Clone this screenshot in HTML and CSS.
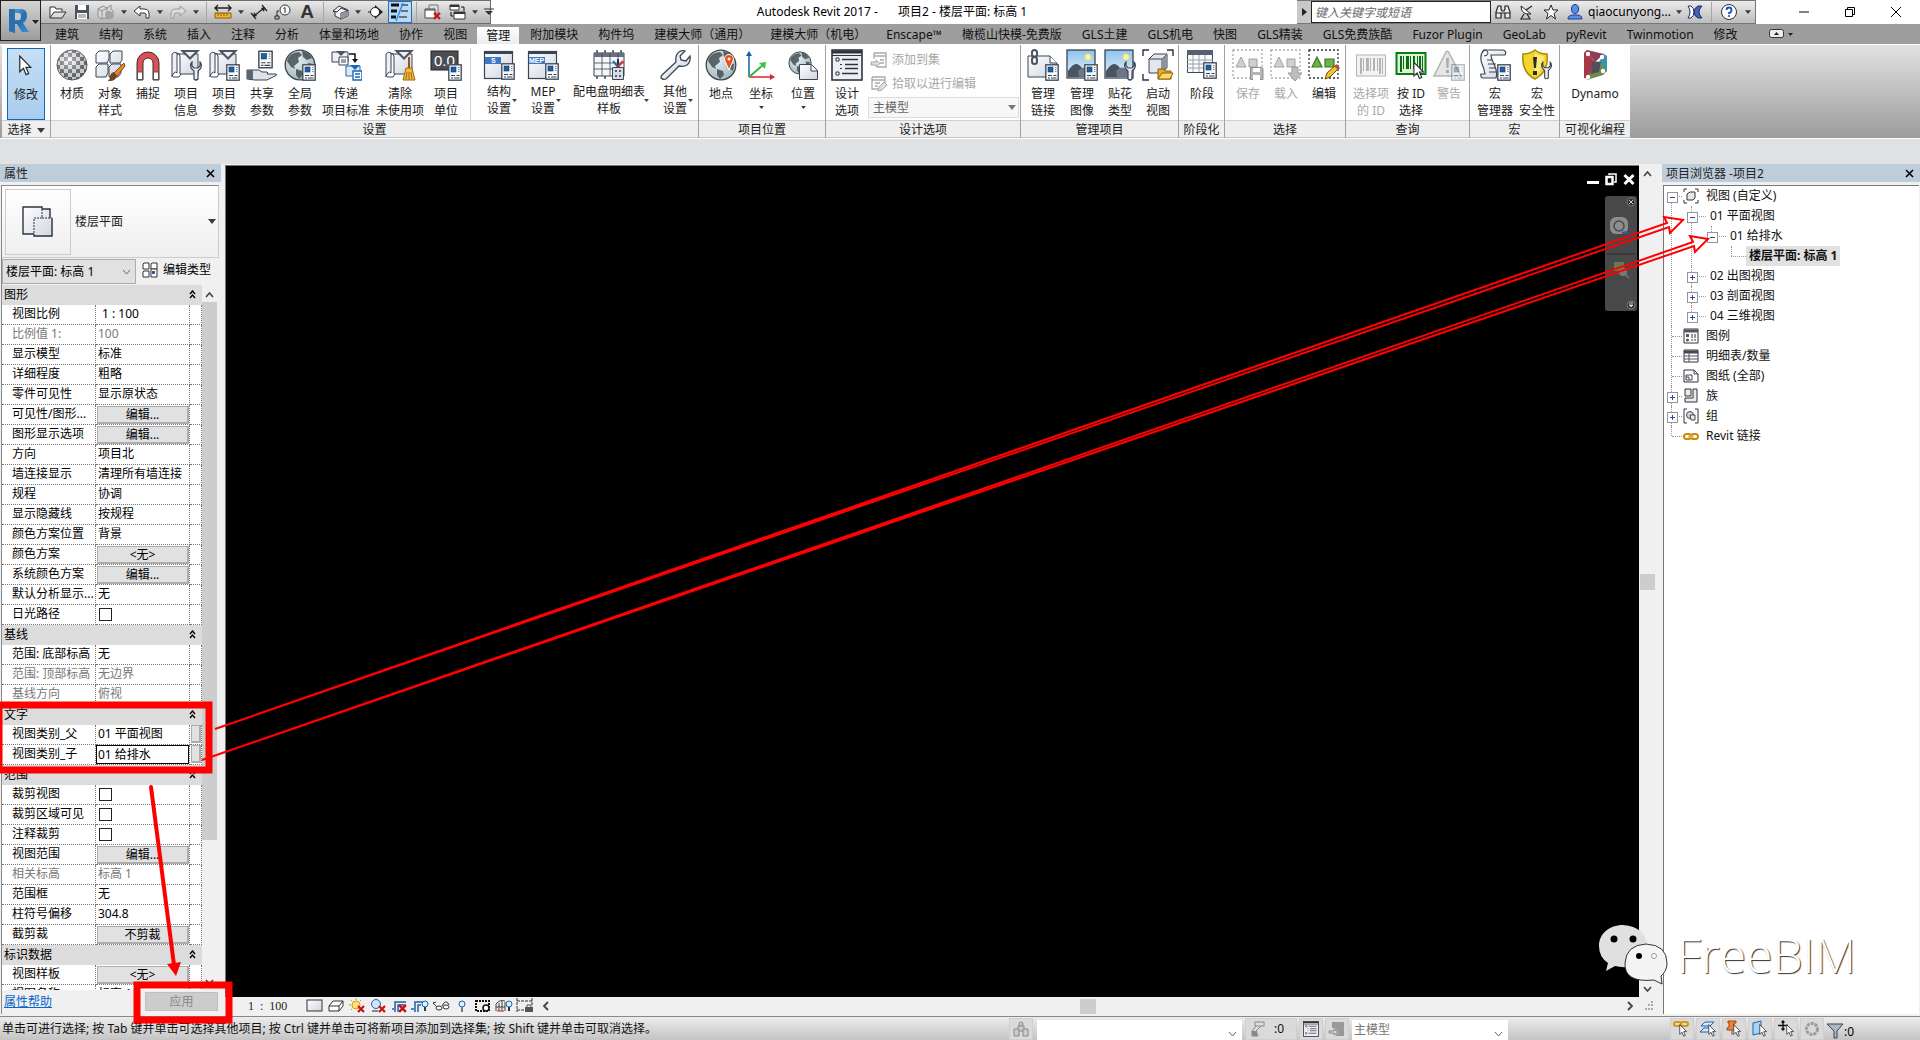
FILE: index.html
```html
<!DOCTYPE html>
<html lang="zh-CN">
<head>
<meta charset="utf-8">
<title>Autodesk Revit 2017 - 项目2</title>
<link rel="stylesheet" href="styles.css">
</head>
<body>
<svg class="sprite" aria-hidden="true">
<defs>
<linearGradient id="gLight" x1="0" y1="0" x2="1" y2="1"><stop offset="0" stop-color="#ffffff"/><stop offset="1" stop-color="#cfd4de"/></linearGradient>
<linearGradient id="gR" x1="0" y1="0" x2="1" y2="1"><stop offset="0" stop-color="#63b4ea"/><stop offset=".5" stop-color="#2a6cb0"/><stop offset="1" stop-color="#3d93d6"/></linearGradient>
<linearGradient id="gSky" x1="0" y1="0" x2="0" y2="1"><stop offset="0" stop-color="#8fc3ea"/><stop offset="1" stop-color="#e6f3fb"/></linearGradient>
<radialGradient id="gGlobe" cx=".4" cy=".35" r=".7"><stop offset="0" stop-color="#e4eff0"/><stop offset="1" stop-color="#9fb4b9"/></radialGradient>
<radialGradient id="gBall" cx=".4" cy=".35" r=".7"><stop offset="0" stop-color="#fff" stop-opacity=".6"/><stop offset="1" stop-color="#444" stop-opacity=".3"/></radialGradient>
<pattern id="chk" width="8" height="8" patternUnits="userSpaceOnUse"><rect width="8" height="8" fill="#fff"/><rect width="4" height="4" fill="#59606a"/><rect x="4" y="4" width="4" height="4" fill="#59606a"/></pattern>
</defs>
<symbol id="card" viewBox="0 0 14 17"><rect x=".8" y=".8" width="12.4" height="15.4" fill="#f7f9fb" stroke="#3a4454" stroke-width="1.3"/><rect x="3" y="3" width="5" height="5" fill="#1f5f9f" stroke="#123a66" stroke-width=".6"/><path d="M10 3.5h1.5M10 5.5h1.5M10 7.5h1.5" stroke="#7d8794"/><path d="M3 11.5h4M8.500 11.500h3M3 14h2M6 14h5.500" stroke="#3a4454" stroke-width="1.100"/></symbol>
<symbol id="wrench" viewBox="0 0 12 20"><path d="M2 1v4l2 2h4l2-2V1c2 2 2 6-1 8l-1 1v8q-2 2-4 0v-8l-1-1C0 7 0 3 2 1z" fill="#eef0f4" stroke="#3a4454" stroke-width="1.200"/></symbol>
<symbol id="caret" viewBox="0 0 8 5"><path d="M0 0h8L4 5z" fill="#3a3a3a"/></symbol>
<symbol id="cursor" viewBox="0 0 12 20"><path d="M1 1v15l3.500-3.300 2.500 6 2.500-1-2.500-6h4.500z" fill="#fff" stroke="#2b2f36" stroke-width="1.200"/></symbol>
<symbol id="sheet" viewBox="0 0 32 32"><path d="M6 5h22v20H10V8Q10 4 7 4" fill="url(#gLight)" stroke="#3a4454"/><path d="M2 5q2-3 5-1v20q-1-2-3 0-2 2-2 4z" fill="#eef0f4" stroke="#3a4454"/><path d="M3 28h6l2-3" fill="none" stroke="#3a4454"/><path d="M10 1h20L20 11z" fill="#4d5665"/><path d="M15 3h10l-5 5z" fill="#eef0f4"/></symbol>
<symbol id="globe" viewBox="0 0 32 32"><circle cx="16" cy="16" r="14.800" fill="url(#gGlobe)" stroke="#3d474b" stroke-width="1.300"/><path d="M4 9Q8 3 15 3l3 3-4 3 1 4-5 4 1 3-4-2-4-6zM18 2q7 1 10 7l-5 2-4-3zM12 20l6 2 1 4-4 4-3-4zM24 14l5 1-1 7-4-3z" fill="#434f52" opacity=".85"/></symbol>
<symbol id="i-mat" viewBox="0 0 32 32"><circle cx="16" cy="16" r="15" fill="url(#chk)" stroke="#555"/><circle cx="16" cy="16" r="15" fill="url(#gBall)"/></symbol>
<symbol id="i-obj" viewBox="0 0 32 32"><g fill="url(#gLight)" stroke="#3a4454"><path d="M2 5l3-3h10v8l-2 4H2zM16 5l3-3h9v9l-2 3H16zM2 18l3-3h9v9l-2 4H2zM15 18l3-3h9v9l-3 4h-9z"/></g><path d="M30 14L20 24l3 3 8-10z" fill="#e08a2c" stroke="#8a4a10"/><path d="M20 23q-4 1-4 5 0 3-3 4 8 1 10-5z" fill="#6b4526"/></symbol>
<symbol id="i-snap" viewBox="0 0 32 32"><path d="M5 31V14a11 11 0 0 1 22 0v17h-6V14a5 5 0 0 0-10 0v17z" fill="#dd4f52" stroke="#3a3030"/><path d="M5.500 23h5v7.500h-5zM21.500 23h5v7.500h-5z" fill="#fff" stroke="#555"/></symbol>
<symbol id="i-info" viewBox="0 0 32 32"><use href="#sheet" width="32" height="32"/><use href="#wrench" x="20" y="12" width="12" height="20"/></symbol>
<symbol id="i-param" viewBox="0 0 32 32"><use href="#sheet" width="32" height="32"/><use href="#card" x="18" y="15" width="14" height="17"/></symbol>
<symbol id="i-share" viewBox="0 0 32 32"><use href="#card" x="12" y="1" width="15" height="19"/><path d="M1 21h8q4-1 7 2h5q2 1 0 2h9q2 1-1 2l-8 4H9l-8-1z" fill="#dfe2e8" stroke="#3a4454"/><path d="M1 21h6v9H1z" fill="#5c6574"/></symbol>
<symbol id="i-global" viewBox="0 0 32 32"><use href="#globe" width="32" height="32"/><use href="#card" x="18" y="15" width="14" height="17"/></symbol>
<symbol id="i-trans" viewBox="0 0 32 32"><path d="M2 3h16v10H2z" fill="#eef0f4" stroke="#3a4454"/><path d="M6 2h10l-5 5z" fill="#4d5665"/><path d="M9 8h9v8H9zM11 11h5M11 13h5" fill="#fff" stroke="#3a4454"/><path d="M19 5h6v6" fill="none" stroke="#111" stroke-width="1.500"/><path d="M22 10h6l-3 4z" fill="#111"/><path d="M16 17h14v10H16z" fill="#dcebfa" stroke="#1b66b8"/><path d="M20 16h10l-5 5z" fill="#1b66b8"/><path d="M23 22h9v9h-9zM25 25h5M25 28h5" fill="#fff" stroke="#1b66b8" stroke-width="1.400"/></symbol>
<symbol id="i-purge" viewBox="0 0 32 32"><use href="#sheet" width="32" height="32"/><path d="M25 8v12" stroke="#9b5417" stroke-width="2"/><path d="M22 19h6l3 12H19z" fill="#f0b840" stroke="#a36a10"/><path d="M23 23l-1 7M25 23v8M27 23l1 7" stroke="#a36a10"/></symbol>
<symbol id="win" viewBox="0 0 32 32"><rect x="1.500" y="2.500" width="28" height="27" fill="url(#gLight)" stroke="#3a4454" stroke-width="1.200"/><path d="M1 2h29v3H1z" fill="#3a4454"/><rect x="2" y="8" width="16" height="7" fill="#3d78c7"/></symbol>
<symbol id="i-panel" viewBox="0 0 32 32"><path d="M1 4h30v23H1z" fill="#f6f7f9" stroke="#3a4454"/><path d="M1 4h30v4H1z" fill="#66707f"/><path d="M1 14h30M1 20h30M9 4v23M17 4v23M25 4v23" stroke="#3a4454" stroke-width=".800"/><path d="M4 1v3M12 1v3M20 1v3M28 1v3M4 27v3M12 27v3" stroke="#3a4454" stroke-width="1.500"/><path d="M20 12l5 6" stroke="#1976c9" stroke-width="2"/><path d="M25 10v8" stroke="#333" stroke-width="2"/><path d="M30 12l-5 6" stroke="#d33" stroke-width="2"/><path d="M19.500 18.500h11v12h-11z" fill="#d7dbe2" stroke="#3a4454"/><path d="M22 21h2v2h-2zM26 21h2v2h-2zM22 26h2v2h-2zM26 26h2v2h-2z" fill="#555e6c"/></symbol>
<symbol id="i-other" viewBox="0 0 32 32"><path d="M3 26L17 13q-1-7 3-10 3-2 6-1l-5 5 1 4 5 1 4-5q1 6-3 9-3 2-8 1L7 30q-3 1-5-1 0-2 1-3z" fill="url(#gLight)" stroke="#3a4454" stroke-width="1.300"/></symbol>
<symbol id="i-place" viewBox="0 0 32 32"><use href="#globe" width="32" height="32"/><path d="M24 21l-4-9a4.500 4.500 0 1 1 8 0z" fill="#e8501c" stroke="#fff"/><circle cx="24" cy="10" r="1.500" fill="#fff"/></symbol>
<symbol id="i-coord" viewBox="0 0 32 32"><path d="M4 28V6" stroke="#0a62b0" stroke-width="1.500"/><path d="M1 7h6L4 2z" fill="#0a62b0"/><path d="M4 28h22" stroke="#d22" stroke-width="1.500"/><path d="M25 25v6l5-3z" fill="#d22"/><path d="M4 28L18 16" stroke="#3cb43c" stroke-width="2"/><path d="M14 14l7-1-1 7z" fill="#3cc43c"/></symbol>
<symbol id="i-pos" viewBox="0 0 32 32"><use href="#globe" x="1" y="2" width="24" height="24"/><path d="M12.500 15.500h12l6 6v9h-18z" fill="url(#gLight)" stroke="#3a4454"/><path d="M24 16v6h6" fill="#fff" stroke="#3a4454"/></symbol>
<symbol id="i-opt" viewBox="0 0 32 32"><rect x="1" y="1" width="30" height="30" fill="#edeff3" stroke="#2d3440" stroke-width="1.600"/><path d="M1 3h30" stroke="#2d3440" stroke-width="3"/><path d="M1 6.500h30" stroke="#2d3440"/><path d="M5 9h3v3H5zM5 23h3v3H5z" fill="#fff" stroke="#2d3440"/><path d="M11 10.500h16M14 15.500h13M14 19.500h13M11 24.500h16" stroke="#2d3440" stroke-width="1.400"/><path d="M9 15h2v1H9zM9 19h2v1H9z" fill="#2d3440"/></symbol>
<symbol id="i-link" viewBox="0 0 32 32"><path d="M1 7h22l7 7v14H1z" fill="url(#gLight)" stroke="#3a4454"/><path d="M23 7v7h7" fill="#fff" stroke="#3a4454"/><g fill="none" stroke="#4a5462" stroke-width="2"><rect x="5" y="1" width="5" height="7" rx="2.500"/><rect x="5" y="8" width="5" height="7" rx="2.500"/></g><use href="#card" x="18" y="15" width="14" height="17"/></symbol>
<symbol id="pic" viewBox="0 0 32 32"><rect x="1" y="1" width="28" height="28" fill="url(#gSky)" stroke="#3a4454" stroke-width="1.300"/><circle cx="22" cy="8" r="3" fill="#fff3a0" stroke="#f3e27b"/><path d="M2 22q5-8 9-7 5 1 9 13H2z" fill="#4b5361"/><path d="M12 22q4-5 8-3l8 6v3H13z" fill="#6d7688"/></symbol>
<symbol id="i-img" viewBox="0 0 32 32"><use href="#pic" width="32" height="32"/><use href="#card" x="18" y="15" width="14" height="17"/></symbol>
<symbol id="i-decal" viewBox="0 0 32 32"><use href="#pic" width="32" height="32"/><use href="#wrench" x="20" y="12" width="12" height="20"/></symbol>
<symbol id="i-start" viewBox="0 0 32 32"><path d="M1 7V1h6M25 1h6v6M1 25v6h6" fill="none" stroke="#2d3440" stroke-width="1.400"/><path d="M7 10l5-5h13v14l-5 5H7z" fill="#e3e6ec" stroke="#3a4454"/><path d="M7 10h13v14M20 10l5-5" fill="none" stroke="#3a4454"/><path d="M20 10l5-5v14l-5 5z" fill="#8b939f"/><path d="M16 20h6l1 2h6v8H16z" fill="#e8a92c" stroke="#8a5c0c"/><path d="M16 30l4-6h11l-3 6z" fill="#ffd968" stroke="#8a5c0c"/></symbol>
<symbol id="i-phase" viewBox="0 0 32 32"><path d="M1.500 1.500h25v22h-25z" fill="#fafbfc" stroke="#3a4454"/><path d="M1 1h26v5H1z" fill="#566073"/><path d="M1 11h26M1 15h26M1 19h26M7 6v17M13 6v17M19 6v17" stroke="#9aa1ab"/><use href="#card" x="17" y="13" width="14" height="17"/></symbol>
<symbol id="selbox" viewBox="0 0 32 32"><rect x="1" y="1" width="29" height="28" fill="none" stroke="currentColor" stroke-width="1.300" stroke-dasharray="2 2"/></symbol>
<symbol id="i-ssave" viewBox="0 0 32 32" color="#a9a9a9"><use href="#selbox" width="32" height="32"/><path d="M4 18l5-10 5 10zM17 10h8v8h-8z" fill="#d0d0d0" stroke="#a0a0a0"/><path d="M18.500 18.500h11l1.500 1v11h-12.500z" fill="#b5b5b5" stroke="#8f8f8f"/><path d="M21 19h7v4h-7zM21 26h7v5h-7z" fill="#fff"/></symbol>
<symbol id="i-sload" viewBox="0 0 32 32" color="#a9a9a9"><use href="#selbox" width="32" height="32"/><path d="M4 18l5-10 5 10zM17 10h8v8h-8z" fill="#d0d0d0" stroke="#a0a0a0"/><path d="M22 18h6v6h4l-7 8-7-8h4z" fill="#bdbdbd" stroke="#999"/></symbol>
<symbol id="i-sedit" viewBox="0 0 32 32" color="#2d3348"><use href="#selbox" width="32" height="32"/><path d="M4 18l5-10 5 10zM17 10h9v8h-9z" fill="#6fb14d" stroke="#3b7a1e" stroke-width="1.200"/><path d="M17 30l2-6 9-8 3 3-9 9z" fill="#f2c72e" stroke="#6d4a0c"/><path d="M26 17l4 4 2-2-3-4z" fill="#b5562a"/></symbol>
<symbol id="bars" viewBox="0 0 32 24"><path d="M5 4h2v16H5zM8 4h1v13H8zM11 4h3v13h-3zM15 4h1v13h-1zM18 4h2v13h-2zM22 4h1v13h-1zM24 4h2v16h-2zM27 4h1v16h-1z" fill="currentColor"/></symbol>
<symbol id="i-idof" viewBox="0 0 32 32" color="#b3b3b3"><rect x="1.500" y="6" width="29" height="21" fill="#f3f3f3" stroke="#b3b3b3"/><use href="#bars" x="0" y="5" width="32" height="24"/></symbol>
<symbol id="i-byid" viewBox="0 0 32 32" color="#0b6d12"><rect x="1.500" y="4" width="29" height="21" fill="#dff2d8" stroke="#0b7a12" stroke-width="2"/><use href="#bars" x="0" y="3" width="32" height="24"/><use href="#cursor" x="18" y="12" width="11" height="19"/></symbol>
<symbol id="i-warn" viewBox="0 0 32 32"><path d="M13 3q1-1.500 2.500 0L28 27H1z" fill="#e6e6e6" stroke="#b5b5b5" stroke-width="1.500"/><path d="M13 9h3l-.5 10h-2zM13 21h3v3h-3z" fill="#aaa"/><g opacity=".4"><use href="#card" x="18" y="15" width="14" height="17"/></g></symbol>
<symbol id="i-macro" viewBox="0 0 32 32"><path d="M5 1h19q4 1 2 5H12q0 4 3 9 4 8 2 14H5q-4 0-3-4h4q-1-6-3-10Q0 6 5 1z" fill="url(#gLight)" stroke="#3a4454" stroke-width="1.200"/><path d="M5 1q4 0 4 3t-4 3" fill="none" stroke="#3a4454"/><path d="M8 11h6M9 15h8M10 19h7M10 23h7" stroke="#3a4454"/><use href="#card" x="18" y="15" width="14" height="17"/></symbol>
<symbol id="i-msec" viewBox="0 0 32 32"><path d="M14 1q5 4 12 4 2 18-12 25Q0 23 2 5q7 0 12-4z" fill="#f5d52a" stroke="#a58a10" stroke-width="1.500"/><path d="M14 4q4 3 9 3 0 14-9 20" fill="#fbe97c"/><path d="M12 8h4l-1 11h-2zM12 22h4v4h-4z" fill="#2b2b2b"/><use href="#wrench" x="20" y="12" width="11" height="19"/></symbol>
<symbol id="i-dyn" viewBox="0 0 32 32"><path d="M5 4l3-3 15 5-10 9-6 15z" fill="#c94a52"/><path d="M5 4l3-3 6 12-3 17-6-1z" fill="#a83746"/><path d="M8 1l17 4-9 8z" fill="#87415c"/><path d="M25 5l3 2v16l-8-10z" fill="#3b93a8"/><path d="M28 22l-4 4-16 5 6-14 8-2z" fill="#6f8a4a"/><path d="M13 12l9 1-2 10-8 2z" fill="#50505c"/><g fill="#fff"><circle cx="9" cy="5" r="2.200"/><circle cx="23" cy="8" r="2.200"/><circle cx="24" cy="22" r="2.200"/><circle cx="9" cy="28" r="2.200"/></g></symbol>
<symbol id="i-xdel" viewBox="0 0 8 8"><path d="M1 1l6 6M7 1L1 7" stroke="#c81414" stroke-width="2.200"/></symbol>
</svg>

<div class="app">
<header class="top">
  <button class="appbtn" aria-label="应用程序菜单"><svg width="41" height="41" viewBox="0 0 41 41"><path d="M8 8h12q6 0 6 7 0 5-4 7l6 9h-7l-5-8h-2v9l-6-2z" fill="url(#gR)"/><path d="M14 12v7h4q2 0 2-3.500T18 12z" fill="#c6c8ca"/><path d="M8 8h6v24l-6-2z" fill="#2c6fae"/><path d="M31 19h7l-3.500 4z" fill="#222"/></svg></button>
  <div class="titlebar">
    <div class="qat">
      <button aria-label="打开"><svg width="18" height="16" viewBox="0 0 18 16"><path d="M1 14V3h5l1 2h6v2" fill="#fff" stroke="#333"/><path d="M1 14l4-6h12l-4 6z" fill="#d9dce2" stroke="#333"/></svg></button>
      <button aria-label="保存"><svg width="16" height="16" viewBox="0 0 16 16"><path d="M1 1h14v14H1z" fill="#4b535f"/><path d="M4 1h8v5H4zM3 9h10v6H3z" fill="#fff"/><path d="M4 11h8M4 13h8" stroke="#777"/></svg></button>
      <button aria-label="同步"><svg width="18" height="16" viewBox="0 0 18 16"><path d="M1 5l5-3 4 2 4-3v4l2 2v6l-4 2-4-1-4 1-3-3z" fill="#d6d8da" stroke="#8d8f92"/><path d="M1 5l4 2 5-3M5 7v8M10 4v4" fill="none" stroke="#8d8f92"/><circle cx="12" cy="11" r="4" fill="#a2a4a7"/></svg></button>
      <button class="dd" aria-label="同步选项"><svg width="6" height="4"><use href="#caret"/></svg></button>
      <button aria-label="放弃"><svg width="18" height="14" viewBox="0 0 18 14"><path d="M1 6l6-5v3h4q5 0 5 5v4h-3V9q0-1-2-1H7v3z" fill="#fff" stroke="#333"/></svg></button>
      <button class="dd" aria-label="放弃选项"><svg width="6" height="4"><use href="#caret"/></svg></button>
      <button aria-label="重做"><svg width="18" height="14" viewBox="0 0 18 14"><path d="M17 6l-6-5v3H7Q2 4 2 9v4h3V9q0-1 2-1h4v3z" fill="#ddd" stroke="#999"/></svg></button>
      <button class="dd" aria-label="重做选项"><svg width="6" height="4"><use href="#caret"/></svg></button>
      <i class="vsep"></i>
      <button aria-label="测量"><svg width="18" height="14" viewBox="0 0 18 14"><path d="M1 3h16M4 0L1 3l3 3M14 0l3 3-3 3" fill="none" stroke="#222" stroke-width="1.400"/><path d="M1 8h16v5H1z" fill="#f2b92c" stroke="#8a5c0c"/><path d="M4 8v3M7 8v3M10 8v3M13 8v3" stroke="#8a5c0c"/></svg></button>
      <button class="dd" aria-label="测量选项"><svg width="6" height="4"><use href="#caret"/></svg></button>
      <button aria-label="对齐尺寸标注"><svg width="18" height="16" viewBox="0 0 18 16"><path d="M4 12L14 4M1 9l5 6M12 1l5 6" stroke="#222" stroke-width="1.200"/><path d="M3 13l1-5 3 4zM15 3l-1 5-3-4z" fill="#222"/></svg></button>
      <button aria-label="按类别标记"><svg width="16" height="16" viewBox="0 0 16 16"><circle cx="10" cy="6" r="5" fill="#fff" stroke="#333"/><path d="M8.500 4.500L10 3.500V9M4 7H2v5M0 12h4v3H0z" fill="none" stroke="#222"/></svg></button>
      <button class="glyphA" aria-label="文字">A</button>
      <i class="vsep"></i>
      <button aria-label="三维视图"><svg width="17" height="16" viewBox="0 0 17 16"><path d="M1 7l6-5 9 4v6l-7 3-6-3V8z" fill="#eef0f3" stroke="#333"/><path d="M1 7l4 1 4-4 7 3-7 2v6" fill="none" stroke="#333"/><path d="M9 9l7-2v5l-7 3z" fill="#8f97a3"/></svg></button>
      <button class="dd" aria-label="三维视图选项"><svg width="6" height="4"><use href="#caret"/></svg></button>
      <button aria-label="剖面"><svg width="16" height="16" viewBox="0 0 16 16"><path d="M7 1l8 7-8 7z" fill="#222"/><circle cx="7" cy="8" r="4.500" fill="#fff" stroke="#222"/><path d="M0 8h2" stroke="#222"/></svg></button>
      <button class="on" aria-label="细线"><svg width="18" height="18" viewBox="0 0 18 18"><path d="M0 2h8M0 8h6M0 14h5" stroke="#111" stroke-width="3"/><path d="M10 2h7M10 8h7M8 14h8" stroke="#111"/><path d="M12 0L5 18" stroke="#2a8de8" stroke-width="1.400"/></svg></button>
      <i class="vsep"></i>
      <button aria-label="关闭隐藏窗口"><svg width="18" height="16" viewBox="0 0 18 16"><path d="M5 1h9v8H5z" fill="#ddd" stroke="#777"/><path d="M1 5h10v9H1z" fill="#fff" stroke="#444"/><path d="M1 6h10" stroke="#444"/><use href="#i-xdel" x="9" y="8" width="8" height="8"/></svg></button>
      <button aria-label="切换窗口"><svg width="17" height="16" viewBox="0 0 17 16"><path d="M1 1h9v5H1zM5 8h11v7H5z" fill="#fff" stroke="#333"/><path d="M1 2h9M5 9h11" stroke="#333" stroke-width="2"/><path d="M12 3h3v4M2 8v4h2" fill="none" stroke="#111"/></svg></button>
      <button class="dd" aria-label="窗口选项"><svg width="6" height="4"><use href="#caret"/></svg></button>
      <button class="cust" aria-label="自定义快速访问工具栏"><svg width="10" height="8" viewBox="0 0 10 8"><path d="M0 1h10" stroke="#333"/><path d="M1 3h8L5 7z" fill="#333"/></svg></button>
    </div>
    <h1 class="title"><span>Autodesk Revit 2017 -</span><span>项目2 - 楼层平面: 标高 1</span></h1>
    <div class="info">
      <button class="exp" aria-label="展开搜索"><svg width="5" height="8"><path d="M0 0l5 4-5 4z" fill="#222"/></svg></button>
      <input class="search" type="text" placeholder="键入关键字或短语" aria-label="搜索">
      <button aria-label="查找"><svg width="16" height="16" viewBox="0 0 16 16"><path d="M3 2h3v3l1 2h2l1-2V2h3l2 6v6h-5V9H6v5H1V8z" fill="#e8eaee" stroke="#222" stroke-width="1.200"/><path d="M1 9h5M10 9h5" stroke="#222"/></svg></button>
      <button aria-label="通讯中心"><svg width="16" height="16" viewBox="0 0 16 16"><path d="M2 2q0 9 10 8z" fill="#fff" stroke="#222"/><path d="M7 6l6-4M5 10l-3 5h9l-3-5" fill="none" stroke="#222" stroke-width="1.200"/></svg></button>
      <button aria-label="收藏夹"><svg width="16" height="16" viewBox="0 0 16 16"><path d="M8 1l2 5h5l-4 3.500L12.500 15 8 11.500 3.500 15 5 9.500 1 6h5z" fill="#fff" stroke="#222"/></svg></button>
      <button class="user"><svg width="16" height="16" viewBox="0 0 16 16"><ellipse cx="8" cy="5" rx="3.500" ry="4.500" fill="#5b8fe6" stroke="#1c3f8c"/><path d="M1 15q0-4 5-4h4q5 0 5 4z" fill="#5b8fe6" stroke="#1c3f8c"/></svg><span>qiaocunyong...</span><svg width="6" height="4"><use href="#caret"/></svg></button>
      <button class="xch" aria-label="应用商店"><svg width="16" height="14" viewBox="0 0 16 14"><path d="M1 1h3q3 2 3 6t-3 6H1q2-3 2-6T1 1z" fill="#fff" stroke="#1c2f66"/><path d="M15 1h-4Q7 3 7 7t4 6h4q-3-3-3-6t3-6z" fill="#3f63b8" stroke="#1c2f66"/></svg></button>
      <i class="vsep"></i>
      <button class="help" aria-label="帮助"><svg width="18" height="18" viewBox="0 0 18 18"><circle cx="9" cy="9" r="7.500" fill="#fff" stroke="#333"/><path d="M6.500 7q0-2.500 2.500-2.500T11.500 7 9 10v1" fill="none" stroke="#1c4fc0" stroke-width="1.800"/><circle cx="9" cy="13" r="1.100" fill="#1c4fc0"/></svg></button>
      <button class="dd" aria-label="帮助选项"><svg width="6" height="4"><use href="#caret"/></svg></button>
    </div>
    <div class="winctl">
      <button aria-label="最小化"><svg width="12" height="12"><path d="M1 6h10" stroke="#000"/></svg></button>
      <button aria-label="还原"><svg width="12" height="12"><path d="M3.500 3V1.500h7v7H9M1.500 3.500h7v7h-7z" fill="none" stroke="#000"/></svg></button>
      <button aria-label="关闭"><svg width="12" height="12"><path d="M1 1l10 10M11 1L1 11" stroke="#000"/></svg></button>
    </div>
  </div>
  <nav class="tabs">
    <a href="#">建筑</a><a href="#">结构</a><a href="#">系统</a><a href="#">插入</a><a href="#">注释</a><a href="#">分析</a><a href="#">体量和场地</a><a href="#">协作</a><a href="#">视图</a><a href="#" class="active">管理</a><a href="#">附加模块</a><a href="#">构件坞</a><a href="#">建模大师（通用）</a><a href="#">建模大师（机电）</a><a href="#">Enscape™</a><a href="#">橄榄山快模-免费版</a><a href="#">GLS土建</a><a href="#">GLS机电</a><a href="#">快图</a><a href="#">GLS精装</a><a href="#">GLS免费族酷</a><a href="#">Fuzor Plugin</a><a href="#">GeoLab</a><a href="#">pyRevit</a><a href="#">Twinmotion</a><a href="#">修改</a>
    <button aria-label="最小化功能区"><svg width="24" height="10" viewBox="0 0 24 10"><rect x=".5" y=".5" width="14" height="8" rx="2" fill="#eee" stroke="#333"/><path d="M5 6l2.500-3L10 6z" fill="#222"/><path d="M19 4h5l-2.500 3z" fill="#222"/></svg></button>
  </nav>
</header>

<div class="ribbon">
  <section class="panel p-sel"><div class="tools"><button class="tool mod"><svg class="ic"><use href="#cursor" x="8" y="5" width="14" height="21"/></svg><span>修改</span></button></div><h2>选择 <svg width="8" height="5"><use href="#caret"/></svg></h2></section>
  <section class="panel p-set"><div class="tools">
    <button class="tool"><svg class="ic"><use href="#i-mat"/></svg><span>材质</span></button>
    <button class="tool"><svg class="ic"><use href="#i-obj"/></svg><span>对象<br>样式</span></button>
    <button class="tool"><svg class="ic"><use href="#i-snap"/></svg><span>捕捉</span></button>
    <button class="tool"><svg class="ic"><use href="#i-info"/></svg><span>项目<br>信息</span></button>
    <button class="tool"><svg class="ic"><use href="#i-param"/></svg><span>项目<br>参数</span></button>
    <button class="tool"><svg class="ic"><use href="#i-share"/></svg><span>共享<br>参数</span></button>
    <button class="tool"><svg class="ic"><use href="#i-global"/></svg><span>全局<br>参数</span></button>
    <button class="tool w54"><svg class="ic"><use href="#i-trans"/></svg><span>传递<br>项目标准</span></button>
    <button class="tool w54"><svg class="ic"><use href="#i-purge"/></svg><span>清除<br>未使用项</span></button>
    <button class="tool"><svg class="ic"><rect x="1" y="2" width="27" height="19" fill="#4a4e54" stroke="#222"/><text class="digits" x="4" y="17">0.0</text><use href="#card" x="18" y="15" width="14" height="17"/></svg><span>项目<br>单位</span></button>
    <i class="psep"></i>
    <button class="tool w44 drop"><svg class="ic"><use href="#win"/><text class="tiny" x="8" y="14">S</text><use href="#card" x="18" y="14" width="14" height="17"/></svg><span>结构<br>设置</span><svg class="car"><use href="#caret"/></svg></button>
    <button class="tool w44 drop"><svg class="ic"><use href="#win"/><text class="tiny" x="2" y="14">MEP</text><use href="#card" x="18" y="14" width="14" height="17"/></svg><span>MEP<br>设置</span><svg class="car"><use href="#caret"/></svg></button>
    <button class="tool w88 drop"><svg class="ic"><use href="#i-panel"/></svg><span>配电盘明细表<br>样板</span><svg class="car"><use href="#caret"/></svg></button>
    <button class="tool w44 drop"><svg class="ic"><use href="#i-other"/></svg><span>其他<br>设置</span><svg class="car"><use href="#caret"/></svg></button>
  </div><h2>设置</h2></section>
  <section class="panel p-loc"><div class="tools">
    <button class="tool w40"><svg class="ic"><use href="#i-place"/></svg><span>地点</span></button>
    <button class="tool w40"><svg class="ic"><use href="#i-coord"/></svg><span>坐标</span><svg class="below"><use href="#caret"/></svg></button>
    <button class="tool w44"><svg class="ic"><use href="#i-pos"/></svg><span>位置</span><svg class="below"><use href="#caret"/></svg></button>
  </div><h2>项目位置</h2></section>
  <section class="panel p-des"><div class="tools">
    <button class="tool"><svg class="ic"><use href="#i-opt"/></svg><span>设计<br>选项</span></button>
    <div class="stack">
      <button disabled><svg width="16" height="16" viewBox="0 0 16 16"><path d="M3 1h12v14H6M3 1v6M3 4h12M9 8h4M9 11h4" fill="none" stroke="#aaa" stroke-width="1.300"/><path d="M0 10h5V8l4 3.500L5 15v-2H0z" fill="#ddd" stroke="#aaa"/></svg>添加到集</button>
      <button disabled><svg width="16" height="16" viewBox="0 0 16 16"><path d="M1 1h13v6M1 1v12h6M1 4h13M4 7h5M4 10h3" fill="none" stroke="#aaa" stroke-width="1.300"/><path d="M7 15l1-4 5-5 3 3-5 5z" fill="#ddd" stroke="#aaa"/></svg>拾取以进行编辑</button>
      <select aria-label="设计选项" disabled><option>主模型</option></select>
    </div>
  </div><h2>设计选项</h2></section>
  <section class="panel p-man"><div class="tools">
    <button class="tool w40"><svg class="ic"><use href="#i-link"/></svg><span>管理<br>链接</span></button>
    <button class="tool"><svg class="ic"><use href="#i-img"/></svg><span>管理<br>图像</span></button>
    <button class="tool"><svg class="ic"><use href="#i-decal"/></svg><span>贴花<br>类型</span></button>
    <button class="tool"><svg class="ic"><use href="#i-start"/></svg><span>启动<br>视图</span></button>
  </div><h2>管理项目</h2></section>
  <section class="panel p-pha"><div class="tools"><button class="tool w42"><svg class="ic"><use href="#i-phase"/></svg><span>阶段</span></button></div><h2>阶段化</h2></section>
  <section class="panel p-pick"><div class="tools">
    <button class="tool" disabled><svg class="ic"><use href="#i-ssave"/></svg><span>保存</span></button>
    <button class="tool" disabled><svg class="ic"><use href="#i-sload"/></svg><span>载入</span></button>
    <button class="tool"><svg class="ic"><use href="#i-sedit"/></svg><span>编辑</span></button>
  </div><h2>选择</h2></section>
  <section class="panel p-inq"><div class="tools">
    <button class="tool w42" disabled><svg class="ic"><use href="#i-idof"/></svg><span>选择项<br>的 ID</span></button>
    <button class="tool"><svg class="ic"><use href="#i-byid"/></svg><span>按 ID<br>选择</span></button>
    <button class="tool" disabled><svg class="ic"><use href="#i-warn"/></svg><span>警告</span></button>
  </div><h2>查询</h2></section>
  <section class="panel p-mac"><div class="tools">
    <button class="tool w42"><svg class="ic"><use href="#i-macro"/></svg><span>宏<br>管理器</span></button>
    <button class="tool w42"><svg class="ic"><use href="#i-msec"/></svg><span>宏<br>安全性</span></button>
  </div><h2>宏</h2></section>
  <section class="panel p-dyn"><div class="tools"><button class="tool w54"><svg class="ic"><use href="#i-dyn"/></svg><span>Dynamo</span></button></div><h2>可视化编程</h2></section>
</div>
<div class="optbar"></div>

<main class="work">
  <aside class="props">
    <div class="ptitle"><span>属性</span><button aria-label="关闭属性"><svg width="9" height="9"><path d="M1 1l7 7M8 1L1 8" stroke="#000" stroke-width="1.600"/></svg></button></div>
    <div class="pbody">
      <button class="type"><span class="thumb"><svg width="32" height="32" viewBox="0 0 32 32"><path d="M1 1h19v3h9v10h2v17H12v-3H1z" fill="url(#gLight)"/><path d="M12 28H1V1h19v2M20 3h8v9M30 12v18H12v-2" fill="none" stroke="#2d3440" stroke-width="1.400"/><path d="M20 3v9h10M20 12h-8v16" fill="none" stroke="#2d3440" stroke-dasharray="2 1"/></svg></span><span class="tname">楼层平面</span><svg width="8" height="5"><use href="#caret"/></svg></button>
      <div class="inst"><select aria-label="实例"><option>楼层平面: 标高 1</option></select><button class="edit"><svg width="16" height="16" viewBox="0 0 16 16"><path d="M1 2l1-1h5v6H1zM9 2l1-1h5v6H9zM1 10l1-1h5v6H1z" fill="#fff" stroke="#333"/><path d="M9 7h6v8H9z" fill="#fff" stroke="#333"/><path d="M10 9h3v3h-3z" fill="#1f5f9f"/></svg>编辑类型</button></div>
      <div class="list">
        <div class="scroller">
        <table class="grid">
          <colgroup><col class="c1"><col class="c2"><col class="c3"></colgroup>
          <tbody>
          <tr><th colspan="3">图形<span class="chev"></span></th></tr>
          <tr><td>视图比例</td><td class="ind">1 : 100</td><td></td></tr>
          <tr class="ro"><td>比例值 1:</td><td>100</td><td></td></tr>
          <tr><td>显示模型</td><td>标准</td><td></td></tr>
          <tr><td>详细程度</td><td>粗略</td><td></td></tr>
          <tr><td>零件可见性</td><td>显示原状态</td><td></td></tr>
          <tr><td>可见性/图形...</td><td><button>编辑...</button></td><td></td></tr>
          <tr><td>图形显示选项</td><td><button>编辑...</button></td><td></td></tr>
          <tr><td>方向</td><td>项目北</td><td></td></tr>
          <tr><td>墙连接显示</td><td>清理所有墙连接</td><td></td></tr>
          <tr><td>规程</td><td>协调</td><td></td></tr>
          <tr><td>显示隐藏线</td><td>按规程</td><td></td></tr>
          <tr><td>颜色方案位置</td><td>背景</td><td></td></tr>
          <tr><td>颜色方案</td><td><button>&lt;无&gt;</button></td><td></td></tr>
          <tr><td>系统颜色方案</td><td><button>编辑...</button></td><td></td></tr>
          <tr><td>默认分析显示...</td><td>无</td><td></td></tr>
          <tr><td><label for="k1">日光路径</label></td><td><input type="checkbox" id="k1"></td><td></td></tr>
          <tr><th colspan="3">基线<span class="chev"></span></th></tr>
          <tr><td>范围: 底部标高</td><td>无</td><td></td></tr>
          <tr class="ro"><td>范围: 顶部标高</td><td>无边界</td><td></td></tr>
          <tr class="ro"><td>基线方向</td><td>俯视</td><td></td></tr>
          <tr><th colspan="3">文字<span class="chev"></span></th></tr>
          <tr><td>视图类别_父</td><td>01 平面视图</td><td><button aria-label="关联父参数"></button></td></tr>
          <tr><td><label for="sub">视图类别_子</label></td><td><input type="text" id="sub" value="01 给排水"></td><td><button aria-label="关联子参数"></button></td></tr>
          <tr><th colspan="3">范围<span class="chev"></span></th></tr>
          <tr><td><label for="k2">裁剪视图</label></td><td><input type="checkbox" id="k2"></td><td></td></tr>
          <tr><td><label for="k3">裁剪区域可见</label></td><td><input type="checkbox" id="k3"></td><td></td></tr>
          <tr><td><label for="k4">注释裁剪</label></td><td><input type="checkbox" id="k4"></td><td></td></tr>
          <tr><td>视图范围</td><td><button>编辑...</button></td><td></td></tr>
          <tr class="ro"><td>相关标高</td><td>标高 1</td><td></td></tr>
          <tr><td>范围框</td><td>无</td><td></td></tr>
          <tr><td>柱符号偏移</td><td>304.8</td><td></td></tr>
          <tr><td>截剪裁</td><td><button>不剪裁</button></td><td></td></tr>
          <tr><th colspan="3">标识数据<span class="chev"></span></th></tr>
          <tr><td>视图样板</td><td><button>&lt;无&gt;</button></td><td></td></tr>
          <tr><td>视图名称</td><td>标高 1</td><td></td></tr>
          </tbody>
        </table>
        </div>
        <div class="vbar"><svg width="9" height="6"><path d="M1 5l3.500-4L8 5" fill="none" stroke="#444" stroke-width="1.600"/></svg><i class="thumbv"></i><svg width="9" height="6"><path d="M1 1l3.500 4L8 1" fill="none" stroke="#444" stroke-width="1.600"/></svg></div>
      </div>
      <div class="pfoot"><a href="#">属性帮助</a><button disabled>应用</button></div>
    </div>
  </aside>

  <section class="view">
    <div class="canvas">
      <div class="docctl">
        <button aria-label="最小化视图"><svg width="12" height="12"><path d="M0 8h12v3H0z" fill="#fff"/></svg></button>
        <button aria-label="还原视图"><svg width="12" height="12"><path d="M4 2V1h7v8H9" fill="none" stroke="#fff" stroke-width="1.500"/><path d="M1.500 4h6v7h-6z" fill="none" stroke="#fff" stroke-width="2.500"/></svg></button>
        <button aria-label="关闭视图"><svg width="12" height="12"><path d="M1.500 2l9 9M10.500 2l-9 9" stroke="#fff" stroke-width="3"/></svg></button>
      </div>
      <div class="navbar">
        <svg width="32" height="115" viewBox="0 0 32 115"><circle cx="26" cy="6" r="4" fill="#2e2e2e" stroke="#777"/><path d="M24 4l4 4M28 4l-4 4" stroke="#ccc"/><rect x="5" y="21" width="18" height="17" rx="6" fill="#8b8e90"/><circle cx="14" cy="30" r="5" fill="none" stroke="#4a4a4a" stroke-width="1.500"/><path d="M17 37q4-2 8 1" fill="none" stroke="#2f5a8c" stroke-width="2"/><path d="M2 58h28" stroke="#2c2c2c"/><rect x="9" y="66" width="10" height="9" fill="#5d7f50"/><circle cx="18" cy="76" r="4" fill="#77797a"/><path d="M20 78l4 4" stroke="#777" stroke-width="1.500"/><circle cx="26" cy="109" r="4" fill="#2e2e2e" stroke="#777"/><path d="M24 107h4M24 109h4l-2 2z" stroke="#ccc" fill="#ccc"/></svg>
      </div>
    </div>
    <div class="vscroll"><svg width="9" height="6"><path d="M1 5l3.500-4L8 5" fill="none" stroke="#444" stroke-width="1.600"/></svg><i></i><svg width="9" height="6"><path d="M1 1l3.500 4L8 1" fill="none" stroke="#444" stroke-width="1.600"/></svg></div>
    <div class="vcb">
      <span class="scale">1  :  100</span>
      <svg viewBox="0 0 18 16"><rect x="1" y="2" width="15" height="11" fill="url(#gLight)" stroke="#333"/></svg>
      <svg viewBox="0 0 18 16"><path d="M2 8l4-5h10v5l-4 5H2zM2 8h10v5M12 8l4-5" fill="#fff" stroke="#333"/></svg>
      <svg viewBox="0 0 18 16"><circle cx="8" cy="7" r="4" fill="#ffe27a" stroke="#d99a10"/><path d="M8 0v2M1 7h2M3 2l1 1M3 12l1-1M13 2l-1 1" stroke="#d99a10"/><use href="#i-xdel" x="9" y="7" width="8" height="8"/></svg>
      <svg viewBox="0 0 18 16"><circle cx="7" cy="6" r="4.500" fill="#cfe6fa" stroke="#1c62ae"/><path d="M3 13h6" stroke="#888" stroke-width="2"/><use href="#i-xdel" x="9" y="7" width="8" height="8"/></svg>
      <svg viewBox="0 0 18 16"><path d="M2 11h2M5 14V4h11M8 14V7h8" fill="none" stroke="#1c62ae" stroke-width="1.500"/><use href="#i-xdel" x="8" y="6" width="9" height="9"/></svg>
      <svg viewBox="0 0 18 16"><path d="M0 11h3M4 14V4h9M7 14V7h3" fill="none" stroke="#1c62ae" stroke-width="1.500"/><circle cx="14" cy="6" r="3" fill="#d9efff" stroke="#1c62ae"/><path d="M14 9v4" stroke="#333" stroke-width="2"/></svg>
      <svg viewBox="0 0 18 16"><path d="M1 5l4 4M1 5l3-1M10 8q4-8 7-1" fill="none" stroke="#333"/><ellipse cx="7" cy="10" rx="3" ry="2" fill="#fff" stroke="#333"/><ellipse cx="14" cy="9" rx="3" ry="2" fill="#fff" stroke="#333"/></svg>
      <svg viewBox="0 0 18 16"><circle cx="9" cy="6" r="3" fill="#d9efff" stroke="#1c62ae"/><path d="M9 9v5" stroke="#777" stroke-width="2"/></svg>
      <svg viewBox="0 0 18 16"><rect x="2" y="3" width="13" height="10" fill="none" stroke="#111" stroke-width="2" stroke-dasharray="2 1"/><circle cx="12" cy="10" r="3" fill="#fff" stroke="#111" stroke-width="1.500"/></svg>
      <svg viewBox="0 0 18 16"><path d="M1 13V6q4-5 9-3M4 13V5M7 13V3M1 9h9M10 13V4" fill="none" stroke="#444"/><path d="M2 13h7" stroke="#c22"/><circle cx="14" cy="6" r="3" fill="#d9efff" stroke="#1c62ae"/><path d="M14 9v4" stroke="#333" stroke-width="2"/></svg>
      <svg viewBox="0 0 18 16"><path d="M1 0v14M16 0v7M1 3h15M1 12h7" fill="none" stroke="#333" stroke-dasharray="3 1"/><path d="M9 9h8v5H9z" fill="#555"/><path d="M11 9V7h4v2" fill="none" stroke="#555"/></svg>
      <svg class="lt" viewBox="0 0 18 16"><path d="M11 4L7 8l4 4" fill="none" stroke="#444" stroke-width="1.800"/></svg>
      <i class="hthumb"></i>
      <svg class="rt" viewBox="0 0 18 16"><path d="M7 4l4 4-4 4" fill="none" stroke="#444" stroke-width="1.800"/></svg>
    </div>
    <div class="grip"><svg width="10" height="10"><path d="M7 1h2M4 4h2M7 4h2M1 8h2M4 8h2M7 8h2" stroke="#aaa" stroke-width="2"/></svg></div>
  </section>

  <aside class="browser">
    <div class="ptitle"><span>项目浏览器 -项目2</span><button aria-label="关闭项目浏览器"><svg width="9" height="9"><path d="M1 1l7 7M8 1L1 8" stroke="#000" stroke-width="1.600"/></svg></button></div>
    <div class="tree">
      <ul>
        <li><div class="node"><i class="tg minus"></i><svg viewBox="0 0 16 16"><path d="M4 1H1v3M12 1h3v3M1 12v3h3M15 12v3h-3" fill="none" stroke="#333"/><path d="M4 6l3-2h5v6l-2 2H4z" fill="#e3e6ec" stroke="#333"/></svg>视图 (自定义)</div>
          <ul>
            <li><div class="node"><i class="tg minus"></i>01 平面视图</div>
              <ul><li><div class="node"><i class="tg minus"></i>01 给排水</div>
                <ul class="leaf"><li><div class="node"><b>楼层平面: 标高 1</b></div></li></ul>
              </li></ul>
            </li>
            <li><div class="node"><i class="tg"></i>02 出图视图</div></li>
            <li><div class="node"><i class="tg"></i>03 剖面视图</div></li>
            <li><div class="node"><i class="tg"></i>04 三维视图</div></li>
          </ul>
        </li>
        <li><div class="node"><i class="no"></i><svg viewBox="0 0 16 16"><path d="M1 1h14v14H1z" fill="#fff" stroke="#333"/><path d="M1 3h14" stroke="#556" stroke-width="3"/><path d="M3 6h3v3H3z" fill="#555"/><circle cx="4.500" cy="12" r="1.500" fill="#555"/><path d="M8 7h5M8 9h5M8 12h5" stroke="#333" stroke-dasharray="2 1"/></svg>图例</div></li>
        <li><div class="node"><i class="no"></i><svg viewBox="0 0 16 16"><path d="M1 2h14v12H1z" fill="#fff" stroke="#333"/><path d="M1 4h14" stroke="#445" stroke-width="3"/><path d="M1 8h14M1 11h14M6 4v10" stroke="#556"/></svg>明细表/数量</div></li>
        <li><div class="node"><i class="no"></i><svg viewBox="0 0 16 16"><path d="M1 2h10l4 4v8H1z" fill="#fff" stroke="#333"/><path d="M11 2v4h4M3 12V7h6v5zM3 9h3v3" fill="none" stroke="#445"/></svg>图纸 (全部)</div></li>
        <li><div class="node"><i class="tg"></i><svg viewBox="0 0 16 16"><path d="M2 1h6v7H2zM10 1h4v13H2v-4h8z" fill="#e9ebef" stroke="#333"/></svg>族</div></li>
        <li><div class="node"><i class="tg"></i><svg viewBox="0 0 16 16"><path d="M4 1H1v14h3M12 1h3v14h-3" fill="none" stroke="#333"/><circle cx="7" cy="7" r="3.500" fill="#d4d9e0" stroke="#445"/><path d="M7 7h5v5H8z" fill="#e9ebef" stroke="#445"/></svg>组</div></li>
        <li><div class="node"><i class="no"></i><svg viewBox="0 0 16 16"><g fill="none" stroke="#c98a10" stroke-width="2"><rect x="1" y="6" width="7" height="5" rx="2.500"/><rect x="8" y="6" width="7" height="5" rx="2.500"/></g><path d="M5 8.500h6" stroke="#e8b93a" stroke-width="2"/></svg>Revit 链接</div></li>
      </ul>
    </div>
  </aside>
</main>

<footer class="status">
  <span class="hint">单击可进行选择; 按 Tab 键并单击可选择其他项目; 按 Ctrl 键并单击可将新项目添加到选择集; 按 Shift 键并单击可取消选择。</span>
  <button class="cell" aria-label="工作集"><svg width="16" height="16" viewBox="0 0 16 16"><g fill="#ccc" stroke="#888"><circle cx="8" cy="3" r="2"/><path d="M5 5h6v5H5z"/><path d="M1 8h5v7H1zM10 8h5v7h-5z"/></g></svg></button>
  <select class="ws" aria-label="活动工作集"><option></option></select>
  <span class="cell req"><svg width="16" height="16" viewBox="0 0 16 16"><path d="M4 1h9v4H4zM5 5l-4 5v5h6l-2-5 5-5" fill="#ddd" stroke="#888"/><path d="M1 10h5v5H1z" fill="#888"/></svg>:0</span>
  <button class="cell" aria-label="设计选项"><svg width="16" height="16"><use href="#i-opt"/></svg></button>
  <button class="cell" aria-label="添加到集"><svg width="16" height="16" viewBox="0 0 16 16"><path d="M3 1h12v14H6l3-4-4-4H3z" fill="#999"/><path d="M0 10h5V8l3 3-3 3v-2H0z" fill="#ddd" stroke="#888"/></svg></button>
  <select class="opt" aria-label="活动设计选项"><option>主模型</option></select>
  <div class="right">
    <button class="cell" aria-label="选择链接"><svg width="18" height="18" viewBox="0 0 18 18"><g fill="none" stroke="#d9960f" stroke-width="2"><rect x="1" y="2" width="7" height="4" rx="2"/><rect x="8" y="2" width="7" height="4" rx="2"/></g><use href="#cursor" x="6" y="4" width="8" height="13"/></svg></button>
    <button class="cell" aria-label="选择基线图元"><svg width="18" height="18" viewBox="0 0 18 18"><path d="M6 2h9l-4 4H2zM5 8h8l-4 4H1z" fill="#d6e9fa" stroke="#1c62ae"/><use href="#cursor" x="9" y="4" width="8" height="13"/></svg></button>
    <button class="cell" aria-label="选择锁定图元"><svg width="18" height="18" viewBox="0 0 18 18"><path d="M3 1h8v2H9v4l2 1v2H2V8l2-1V3H3zM7 10v5" fill="#f0803a" stroke="#a3470f"/><use href="#cursor" x="8" y="4" width="8" height="13"/></svg></button>
    <button class="cell" aria-label="按面选择图元"><svg width="18" height="18" viewBox="0 0 18 18"><path d="M2 3l8-2v12l-8 2z" fill="#a9d2f3" stroke="#1c62ae"/><use href="#cursor" x="8" y="4" width="8" height="13"/></svg></button>
    <button class="cell" aria-label="选择时拖曳图元"><svg width="18" height="18" viewBox="0 0 18 18"><path d="M6 1v9M1 5.500h10M4.500 2.500L6 1l1.500 1.500M4.500 8.500L6 10l1.500-1.500" fill="none" stroke="#111" stroke-width="1.400"/><use href="#cursor" x="9" y="4" width="8" height="13"/></svg></button>
    <button class="cell" aria-label="后台进程"><svg width="18" height="18" viewBox="0 0 18 18"><circle cx="9" cy="9" r="5.500" fill="none" stroke="#9c9c9c" stroke-width="3" stroke-dasharray="3 1"/></svg></button>
    <span class="filt"><svg width="18" height="18" viewBox="0 0 18 18"><path d="M1 2h16l-6 7v7H8V9z" fill="#aeb6c2" stroke="#3a4454"/></svg>:0</span>
  </div>
</footer>

<div class="watermark"><svg width="70" height="62" viewBox="0 0 70 62"><path d="M25 1C11 1 1 10 1 22q0 11 9 17l-2 8 9-5q12 3 24-2l8-18Q48 3 25 1z" fill="#e0e0e0"/><circle cx="16" cy="15" r="3.500" fill="#000"/><circle cx="35" cy="15" r="3.500" fill="#000"/><path d="M48 20q21 1 21 19 0 8-6 13l1 8-8-4q-30 3-29-17 1-18 21-19z" fill="#f4f4f4" stroke="#333"/><circle cx="41" cy="32" r="3" fill="#000"/><circle cx="56" cy="32" r="2.500" fill="#fff" stroke="#999"/></svg><span>FreeBIM</span></div>
<svg class="marks" viewBox="0 0 1920 1040" preserveAspectRatio="none" aria-hidden="true">
  <g fill="none" stroke="#f00">
    <rect x="-1" y="705" width="210" height="65" stroke-width="7"/>
    <rect x="137" y="985" width="92" height="35" stroke-width="7"/>
    <path d="M151 787L174 965" stroke-width="4" stroke-linecap="round"/>
    <path d="M215 729L1667 223l-3-6 19 3-13 13-1-6z" stroke-width="2"/>
    <path d="M202 760L1693 242l-3-6 18 3-13 13-1-6z" stroke-width="2"/>
  </g>
  <path d="M167 964l14-2-5 14z" fill="#f00"/>
</svg>
</div>
</body>
</html>
```

FILE: styles.css
```css
* { box-sizing: border-box; }
html, body { margin: 0; height: 100%; }
body { font: 12px/16px "Noto Sans", "Noto Sans CJK SC", sans-serif; color: #1c1c1c; background: #f0f0f0; overflow: hidden; }
button, input, select { font: inherit; color: inherit; margin: 0; padding: 0; border: 0; background: none; border-radius: 0; }
button { cursor: default; }
svg { display: block; flex: none; overflow: visible; }
ul { list-style: none; margin: 0; padding: 0; }
h1, h2 { margin: 0; font: inherit; }
.sprite { position: absolute; width: 0; height: 0; }
.app { position: relative; display: flex; flex-direction: column; height: 100vh; }

/* title bar and tabs */
.top { display: grid; grid-template-columns: 41px 1fr; grid-template-rows: 24px 20px; background: #9e9e9e; }
.appbtn { grid-row: 1 / 3; height: 41px; background: linear-gradient(#d4d4d4, #9c9c9c); border: 1px solid #222; display: grid; place-items: center; }
.titlebar { display: flex; background: #fff; }
.qat { display: flex; align-items: center; flex: none; width: 450px; padding-left: 5px; background: linear-gradient(#e9e9e9, #b5b5b5); border: 1px solid #6c6c6c; border-width: 1px 1px 1px 0; }
.qat button { flex: none; width: 24px; height: 22px; display: grid; place-items: center; }
.qat .dd, .info .dd { width: 12px; display: grid; place-items: center; }
.qat .cust { width: 16px; }
.qat .on { background: #b9d9f5; border: 1px solid #1c6fc4; }
.qat .glyphA { font: bold 19px/20px "Liberation Sans", sans-serif; color: #333; }
.vsep { flex: none; width: 1px; height: 20px; margin: 0 4px; background: #a6a6a6; }
.title { flex: 1; display: flex; justify-content: center; gap: 20px; line-height: 24px; padding-right: 4px; color: #000; white-space: nowrap; }
.info { display: flex; align-items: center; flex: none; width: 459px; background: linear-gradient(#ececec, #bdbdbd); border: 1px solid #777; border-width: 1px 1px 1px 0; }
.info button { flex: none; width: 24px; height: 22px; display: grid; place-items: center; }
.info .exp { width: 14px; background: #c8c8c8; }
.info .search { width: 180px; height: 22px; border: 1px solid #222; background: #fff; padding-left: 3px; font-style: italic; }
.search::placeholder { color: #666; opacity: 1; }
.info .user { width: 120px; display: flex; align-items: center; gap: 5px; padding-left: 4px; color: #000; }
.info .xch { width: 24px; }
.info .help { width: 26px; }
.winctl { display: flex; flex: none; width: 164px; padding-left: 25px; }
.winctl button { width: 46px; display: grid; place-items: center; }
.tabs { display: flex; align-items: stretch; padding-left: 4px; background: #9e9e9e; }
.tabs a { flex: none; padding: 2px 10px 0; line-height: 18px; color: #111; text-decoration: none; white-space: nowrap; }
.tabs a.active { padding: 0 9px; margin: 3px 1px 0 0; line-height: 17px; background: linear-gradient(#fff, #ececec); }
.tabs button { margin-left: 21px; display: grid; place-items: center; }

/* ribbon */
.ribbon { display: flex; flex: none; height: 94px; padding-left: 2px; background: linear-gradient(#e2e2e2, #9c9c9c); border-top: 1px solid #fff; }
.panel { display: flex; flex-direction: column; flex: none; background: #fefefe; border-right: 1px solid #a2a2a2; }
.tools { display: flex; flex: 1; padding: 3px 0 0 2px; }
.panel h2 { height: 18px; line-height: 17px; text-align: center; background: #efefef; border-top: 1px solid #cfcfcf; border-bottom: 1px solid #c4c4c4; }
.p-sel { width: 49px; } .p-set { width: 648px; } .p-loc { width: 127px; } .p-des { width: 195px; } .p-man { width: 158px; }
.p-pha { width: 46px; } .p-pick { width: 121px; } .p-inq { width: 124px; } .p-mac { width: 90px; } .p-dyn { width: 70px; border-right: 0; }
.p-sel .tools { padding-left: 5px; }
.p-sel h2 svg { display: inline-block; margin-left: 2px; vertical-align: middle; }
.p-pick .tools, .p-inq .tools, .p-mac .tools { padding-left: 4px; }
.p-dyn .tools { padding-left: 8px; }
.tool { position: relative; flex: none; width: 38px; height: 72px; display: flex; flex-direction: column; align-items: center; padding-top: 1px; white-space: nowrap; }
.tool span { margin-top: 4px; line-height: 17px; }
.tool:disabled { color: #a8a8a8; }
.w40 { width: 40px; } .w42 { width: 42px; } .w44 { width: 44px; } .w54 { width: 54px; } .w88 { width: 88px; }
.ic { width: 32px; height: 32px; }
.digits { font: 15px "Liberation Sans", sans-serif; fill: #fff; }
.tiny { font: bold 7px "Liberation Sans", sans-serif; fill: #fff; }
.drop span { margin-top: 2px; }
.drop .car { position: absolute; right: 4px; top: 51px; width: 5px; height: 3px; }
.below { width: 5px; height: 3px; margin-top: 4px; }
.mod { background: linear-gradient(#c5dff6, #a9cdee); border: 1px solid #1664b4; }
.psep { width: 1px; height: 72px; margin: 0 6px 0 5px; background: #d0d0d0; }
.stack { display: flex; flex-direction: column; flex: 1; padding: 0 1px 0 2px; }
.stack button { display: flex; align-items: center; gap: 5px; height: 24px; padding-left: 3px; color: #a8a8a8; white-space: nowrap; }
.stack select { height: 21px; padding: 0 18px 0 4px; margin-top: 1px; }
.stack select, .inst select, .status select { appearance: none; background-repeat: no-repeat; opacity: 1; }
.stack select { color: #666; border: 1px solid #dcdcdc; background-color: #f7f7f7; background-image: url("data:image/svg+xml,%3Csvg xmlns='http://www.w3.org/2000/svg' width='8' height='5'%3E%3Cpath d='M0 0h8L4 5z' fill='%23777'/%3E%3C/svg%3E"); background-position: right 2px center; }
.optbar { flex: none; height: 26px; background: #e0e1e3; border-top: 1px solid #fff; }

/* work area */
.work { flex: 1; min-height: 0; display: grid; grid-template-columns: 221px 1fr 258px; gap: 4px; background: #f0f0f0; }
.ptitle { display: flex; justify-content: space-between; align-items: center; flex: none; height: 18px; padding: 1px 6px 0 4px; background: #bfcddb; color: #222; }
.props { display: flex; flex-direction: column; min-height: 0; }
.pbody { flex: 1; min-height: 0; display: flex; flex-direction: column; margin: 3px 2px 2px 1px; border: 1px solid #888; border-width: 1px 0 0 1px; }
.type { flex: none; display: flex; align-items: center; height: 72px; padding: 2px 2px 2px 3px; background: linear-gradient(#fff, #efefef); border-right: 1px solid #ccc; border-bottom: 1px solid #ccc; text-align: left; }
.thumb { width: 66px; height: 66px; display: grid; place-items: center; border: 1px solid #ccc; }
.tname { flex: 1; padding-left: 4px; }
.inst { flex: none; display: flex; height: 27px; padding-top: 1px; }
.inst select { width: 134px; height: 25px; padding-left: 3px; color: #000; background-color: #e1e1e1; border: 1px solid #adadad; background-position: right 4px center; }
.inst select, .status select { background-image: url("data:image/svg+xml,%3Csvg xmlns='http://www.w3.org/2000/svg' width='9' height='6'%3E%3Cpath d='M1 1l3.500 4L8 1' fill='none' stroke='%23666'/%3E%3C/svg%3E"); }
.edit { display: flex; align-items: center; gap: 5px; height: 22px; padding-left: 6px; color: #000; white-space: nowrap; }
.list { flex: 1; min-height: 0; display: flex; color: #000; }
.scroller { width: 201px; overflow: hidden; background: #fff; }
.grid { width: 200px; table-layout: fixed; border-spacing: 0; }
.c1, .c2 { width: 94px; } .c3 { width: 12px; }
.grid th { height: 20px; padding: 0 6px 0 2px; line-height: 20px; font-weight: 400; text-align: left; background: #dcdcdc; }
.grid td { height: 20px; padding: 0 0 0 2px; line-height: 17px; border: 1px dotted #777; border-width: 0 1px 1px 0; white-space: nowrap; vertical-align: top; }
.grid td:first-child { padding-left: 10px; }
.grid td.ind { padding-left: 6px; }
.ro td { color: #777; }
.chev { float: right; width: 7px; height: 20px; background: url("data:image/svg+xml,%3Csvg xmlns='http://www.w3.org/2000/svg' width='7' height='9'%3E%3Cpath d='M1 4l2.500-3L6 4M1 8l2.500-3L6 8' fill='none' stroke='%23000' stroke-width='1.400'/%3E%3C/svg%3E") no-repeat center 5px; }
.grid button { display: block; width: 92px; height: 18px; margin: 1px 0 0 -1px; line-height: 14px; background: #e1e1e1; border: 1px solid #adadad; border-width: 1px 2px 2px 1px; }
.grid td:last-child { padding: 0; }
.grid td:last-child button { width: 10px; margin: 0 0 0 1px; }
.grid input[type=checkbox] { appearance: none; display: block; width: 13px; height: 13px; margin: 3px 0 0 1px; border: 1px solid #222; background: #fff; }
.grid input[type=text] { display: block; width: 93px; height: 19px; margin-left: -2px; padding: 0 0 2px 1px; border: 1px solid #000; }
.vbar { flex: 1; display: flex; flex-direction: column; align-items: center; padding: 7px 2px 5px 0; }
.thumbv { width: 15px; height: 538px; margin: 4px 0 auto; background: #cdcdcd; }
.pfoot { flex: none; display: flex; justify-content: space-between; align-items: center; height: 24px; padding: 0 1px 1px 2px; }
.pfoot a { color: #0a66cc; }
.pfoot button { width: 73px; height: 19px; line-height: 17px; background: #ccc; border: 1px solid #bfbfbf; color: #888; }

.view { display: grid; grid-template-columns: 1fr 19px; grid-template-rows: 1fr 18px; padding: 1px 0; }
.canvas { position: relative; background: #000; border: 1px solid #777; border-right: 0; border-bottom: 0; }
.docctl { position: absolute; top: 7px; right: 4px; display: flex; gap: 6px; }
.navbar { position: absolute; top: 30px; right: 2px; width: 32px; height: 115px; background: #484848; border-radius: 3px; }
.vscroll { display: flex; flex-direction: column; align-items: center; justify-content: space-between; padding: 6px 3px 5px 1px; }
.vscroll i { width: 15px; height: 16px; background: #cdcdcd; }
.vcb { display: flex; align-items: center; gap: 3px; padding-left: 23px; }
.vcb svg { width: 18px; height: 16px; }
.vcb .scale { width: 55px; font: 12px/16px "Liberation Serif", serif; white-space: pre; color: #222; }
.hthumb { width: 16px; height: 15px; margin-left: 37.500%; background: #cdcdcd; }
.vcb .rt { margin-left: auto; }
.grip { display: grid; place-items: center; }

/* project browser */
.browser { display: flex; flex-direction: column; min-height: 0; }
.tree { flex: 1; margin: 3px 1px 2px 1px; padding: 0 0 0 3px; background: #fff; border: 1px solid #777; border-width: 1px 0 0 1px; color: #111; }
.tree li { position: relative; }
.tree li::before { content: ""; position: absolute; left: 4px; top: 0; bottom: 0; border-left: 1px dotted #999; }
.tree li:last-child::before { bottom: auto; height: 10px; }
.tree > ul > li:first-child::before { top: 10px; }
.tree ul ul { padding-left: 20px; }
.node { display: flex; align-items: center; height: 20px; white-space: nowrap; }
.node svg { width: 16px; height: 16px; margin: 0 7px 0 2px; }
.tg, .no { position: relative; flex: none; width: 14px; height: 20px; }
.tree ul ul .tg { width: 23px; }
.tg::before { content: ""; position: absolute; left: 0; top: 6px; width: 9px; height: 9px; border: 1px solid #969696; background: linear-gradient(#2a4a9a, #2a4a9a) center / 5px 1px no-repeat, linear-gradient(#2a4a9a, #2a4a9a) center / 1px 5px no-repeat, #fff; }
.tg.minus::before { background: linear-gradient(#2a4a9a, #2a4a9a) center / 5px 1px no-repeat, #fff; }
.tg::after, .no::after { content: ""; position: absolute; left: 10px; right: 4px; top: 10px; border-top: 1px dotted #999; }
.tree > ul > li > .node > i::after { right: -1px; }
.no::after { left: 5px; }
.leaf .node::before { content: ""; width: 15px; margin-left: 4px; border-top: 1px dotted #999; }
.node b { padding: 0 3px; line-height: 20px; background: #e1e1e1; font-weight: 700; }

/* status bar */
.status { flex: none; display: flex; align-items: center; height: 24px; background: linear-gradient(#ececec, #c4c4c4); border-top: 1px solid #888; color: #111; }
.hint { flex: 0 1 1009px; padding-left: 2px; white-space: nowrap; }
.cell { flex: none; height: 22px; width: 24px; display: grid; place-items: center; background: #dadada; border: 1px solid #cfcfcf; }
.cell + .cell { margin-left: 2px; }
.right .cell + .cell { margin-left: 0; }
.status .req { display: flex; align-items: center; gap: 7px; width: 52px; margin-left: 3px; padding-left: 5px; }
.status select { flex: none; height: 20px; align-self: flex-end; background-color: #fff; background-position: right 5px bottom 3px; color: #777; padding-left: 2px; }
.status .ws { width: 205px; margin-left: 4px; }
.status .opt { width: 156px; margin-left: 3px; }
.right { display: flex; gap: 2px; margin-left: auto; padding-right: 64px; }
.filt { display: flex; align-items: flex-end; width: 30px; color: #000; }

/* overlays */
.watermark { position: absolute; right: 64px; bottom: 54px; display: flex; align-items: center; gap: 9px; }
.watermark span { font: 300 48px/60px "Open Sans", sans-serif; color: #fff; text-shadow: 1px 1px 1px #333; }
.marks { position: absolute; inset: 0; width: 100%; height: 100%; pointer-events: none; }
```
